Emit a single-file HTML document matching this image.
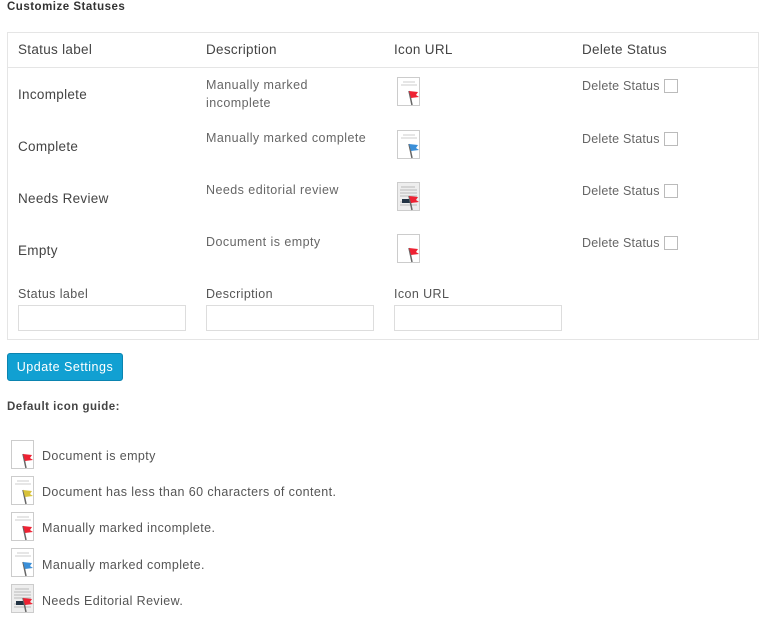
<!DOCTYPE html>
<html><head><meta charset="utf-8"><style>
body{margin:0;background:#fff;font-family:"Liberation Sans",sans-serif;color:#555;width:768px;height:618px;overflow:hidden;position:relative}
.a{position:absolute;white-space:nowrap}
.box{position:absolute;left:7px;top:32px;width:752px;height:308px;border:1px solid #e5e5e5;box-sizing:border-box}
.h{font-size:13.5px;color:#444;letter-spacing:.3px}
.d{font-size:12.5px;color:#666;line-height:18px;letter-spacing:.45px}
.ds{letter-spacing:.2px}
.g{font-size:12.5px;color:#555;letter-spacing:.4px}
.cb{position:absolute;width:14px;height:14px;border:1px solid #bbb;box-sizing:border-box}
.in{position:absolute;width:168px;height:26px;border:1px solid #ddd;box-sizing:border-box}
svg{position:absolute}
</style></head><body>
<svg width="0" height="0" style="position:absolute"><defs>
<g id="doc"><rect x="0.5" y="0.5" width="22" height="28" fill="#fff" stroke="#ccc"/></g>
<g id="lines"><path d="M6 5h12M4 8h16" stroke="#ccc" stroke-width="1"/></g>
<g id="fl"><path d="M12 14l3 14" stroke="#666" stroke-width="1.5"/></g>
</defs></svg>
<div class="a" style="left:7px;top:1px;font-size:11.5px;font-weight:bold;color:#333;letter-spacing:.5px">Customize Statuses</div>
<div class="box"></div>
<div style="position:absolute;left:8px;top:67px;width:750px;height:1px;background:#e5e5e5"></div>
<div class="a h" style="left:18px;top:42px">Status label</div>
<div class="a h" style="left:206px;top:42px">Description</div>
<div class="a h" style="left:394px;top:42px">Icon URL</div>
<div class="a h" style="left:582px;top:42px">Delete Status</div>

<div class="a h" style="left:18px;top:87px">Incomplete</div>
<div class="a d" style="left:206px;top:76px">Manually marked<br>incomplete</div>
<div class="a h" style="left:18px;top:139px">Complete</div>
<div class="a d" style="left:206px;top:129px">Manually marked complete</div>
<div class="a h" style="left:18px;top:191px">Needs Review</div>
<div class="a d" style="left:206px;top:181px">Needs editorial review</div>
<div class="a h" style="left:18px;top:243px">Empty</div>
<div class="a d" style="left:206px;top:233px">Document is empty</div>

<div class="a d ds" style="left:582px;top:77px">Delete Status</div><div class="cb" style="left:664px;top:79px"></div>
<div class="a d ds" style="left:582px;top:130px">Delete Status</div><div class="cb" style="left:664px;top:132px"></div>
<div class="a d ds" style="left:582px;top:182px">Delete Status</div><div class="cb" style="left:664px;top:184px"></div>
<div class="a d ds" style="left:582px;top:234px">Delete Status</div><div class="cb" style="left:664px;top:236px"></div>

<svg style="left:397px;top:77px" width="28" height="30"><use href="#doc"/><use href="#lines"/><use href="#fl"/><path d="M12 14l9 1-2 3 3 2-8 1z" fill="#e23"/></svg>
<svg style="left:397px;top:130px" width="28" height="30"><use href="#doc"/><use href="#lines"/><use href="#fl"/><path d="M12 14l9 1-2 3 3 2-8 1z" fill="#3b8fd8"/></svg>
<svg style="left:397px;top:182px" width="28" height="30"><rect x="0.5" y="0.5" width="22" height="28" fill="#eee" stroke="#ccc"/><path d="M4 5h14M3 8h17M3 11h17M3 14h17M3 20h17M3 23h17" stroke="#bbb"/><path d="M5 17h10v4H5z" fill="#234"/><use href="#fl"/><path d="M12 14l9 1-2 3 3 2-8 1z" fill="#e23"/></svg>
<svg style="left:397px;top:234px" width="28" height="30"><use href="#doc"/><use href="#fl"/><path d="M12 14l9 1-2 3 3 2-8 1z" fill="#e23"/></svg>

<div class="a g" style="left:18px;top:287px">Status label</div>
<div class="a g" style="left:206px;top:287px">Description</div>
<div class="a g" style="left:394px;top:287px">Icon URL</div>
<div class="in" style="left:18px;top:305px"></div>
<div class="in" style="left:206px;top:305px"></div>
<div class="in" style="left:394px;top:305px"></div>

<div class="a" style="left:7px;top:353px;width:116px;height:28px;background:#11a0d2;border:1px solid #0b84b0;box-sizing:border-box;border-radius:3px;color:#fff;font-size:12.5px;line-height:26px;text-align:center;letter-spacing:.5px">Update Settings</div>
<div class="a" style="left:7px;top:401px;font-size:11.5px;font-weight:bold;color:#444;letter-spacing:.5px">Default icon guide:</div>

<svg style="left:11px;top:440px" width="28" height="30"><use href="#doc"/><use href="#fl"/><path d="M12 14l9 1-2 3 3 2-8 1z" fill="#e23"/></svg>
<svg style="left:11px;top:476px" width="28" height="30"><use href="#doc"/><use href="#lines"/><use href="#fl"/><path d="M12 14l9 1-2 3 3 2-8 1z" fill="#d8c23a"/></svg>
<svg style="left:11px;top:512px" width="28" height="30"><use href="#doc"/><use href="#lines"/><use href="#fl"/><path d="M12 14l9 1-2 3 3 2-8 1z" fill="#e23"/></svg>
<svg style="left:11px;top:548px" width="28" height="30"><use href="#doc"/><use href="#lines"/><use href="#fl"/><path d="M12 14l9 1-2 3 3 2-8 1z" fill="#3b8fd8"/></svg>
<svg style="left:11px;top:584px" width="28" height="30"><rect x="0.5" y="0.5" width="22" height="28" fill="#eee" stroke="#ccc"/><path d="M4 5h14M3 8h17M3 11h17M3 14h17M3 20h17M3 23h17" stroke="#bbb"/><path d="M5 17h10v4H5z" fill="#234"/><use href="#fl"/><path d="M12 14l9 1-2 3 3 2-8 1z" fill="#e23"/></svg>

<div class="a g" style="left:42px;top:449px">Document is empty</div>
<div class="a g" style="left:42px;top:485px">Document has less than 60 characters of content.</div>
<div class="a g" style="left:42px;top:521px">Manually marked incomplete.</div>
<div class="a g" style="left:42px;top:558px">Manually marked complete.</div>
<div class="a g" style="left:42px;top:594px">Needs Editorial Review.</div>
</body></html>
